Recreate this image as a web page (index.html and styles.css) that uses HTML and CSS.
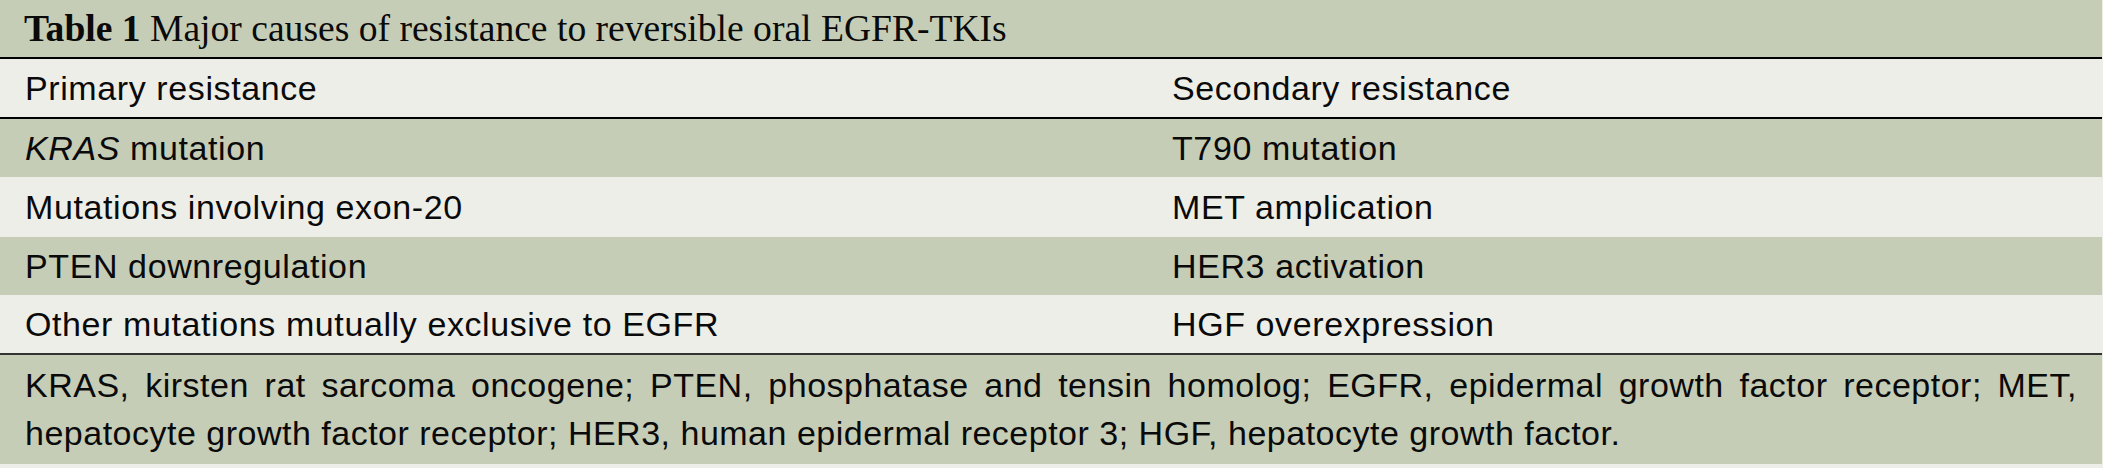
FILE: index.html
```html
<!DOCTYPE html>
<html lang="en">
<head>
<meta charset="utf-8">
<title>Table 1</title>
<link rel="stylesheet" href="styles.css">
</head>
<body>
<div class="table">
  <div class="caption"><b>Table 1</b> Major causes of resistance to reversible oral EGFR-TKIs</div>
  <div class="row head">
    <div class="cell">Primary resistance</div>
    <div class="cell">Secondary resistance</div>
  </div>
  <div class="row green">
    <div class="cell"><i>KRAS</i> mutation</div>
    <div class="cell">T790 mutation</div>
  </div>
  <div class="row light tall">
    <div class="cell">Mutations involving exon-20</div>
    <div class="cell">MET amplication</div>
  </div>
  <div class="row green">
    <div class="cell">PTEN downregulation</div>
    <div class="cell">HER3 activation</div>
  </div>
  <div class="row light">
    <div class="cell">Other mutations mutually exclusive to EGFR</div>
    <div class="cell">HGF overexpression</div>
  </div>
  <div class="foot">KRAS, kirsten rat sarcoma oncogene; PTEN, phosphatase and tensin homolog; EGFR, epidermal growth factor receptor; MET, hepatocyte growth factor receptor; HER3, human epidermal receptor 3; HGF, hepatocyte growth factor.</div>
</div>
</body>
</html>
```
FILE: styles.css
```css
html, body {
  margin: 0;
  padding: 0;
}
body {
  background: #eeeee9;
  width: 2103px;
  height: 468px;
  overflow: hidden;
}
.table {
  width: 2102px;
  background: #c6cdb7;
  color: #0a0a0a;
  font-family: "Liberation Sans", Arial, Helvetica, sans-serif;
  font-size: 34px;
  letter-spacing: 0.6px;
}
.caption {
  height: 57px;
  line-height: 57px;
  padding-left: 24px;
  font-family: "Liberation Serif", "Times New Roman", serif;
  font-size: 37.6px;
  letter-spacing: 0;
  border-bottom: 2px solid #000;
  white-space: nowrap;
}
.caption b {
  font-weight: bold;
}
.row {
  display: grid;
  grid-template-columns: 1147px 1fr;
  height: 58px;
  line-height: 58px;
}
.row.tall {
  height: 60px;
  line-height: 60px;
}
.row.head {
  background: #eeeee8;
  border-bottom: 2px solid #000;
}
.row.green {
  background: #c6cdb7;
}
.row.light {
  background: #eeeee8;
}
.cell {
  padding-left: 25px;
  white-space: nowrap;
}
.foot {
  border-top: 2px solid #333;
  background: #c6cdb7;
  height: 111px;
  box-sizing: border-box;
  padding: 6px 25px 0 25px;
  line-height: 48px;
  text-align: justify;
  letter-spacing: 0.5px;
}
```
